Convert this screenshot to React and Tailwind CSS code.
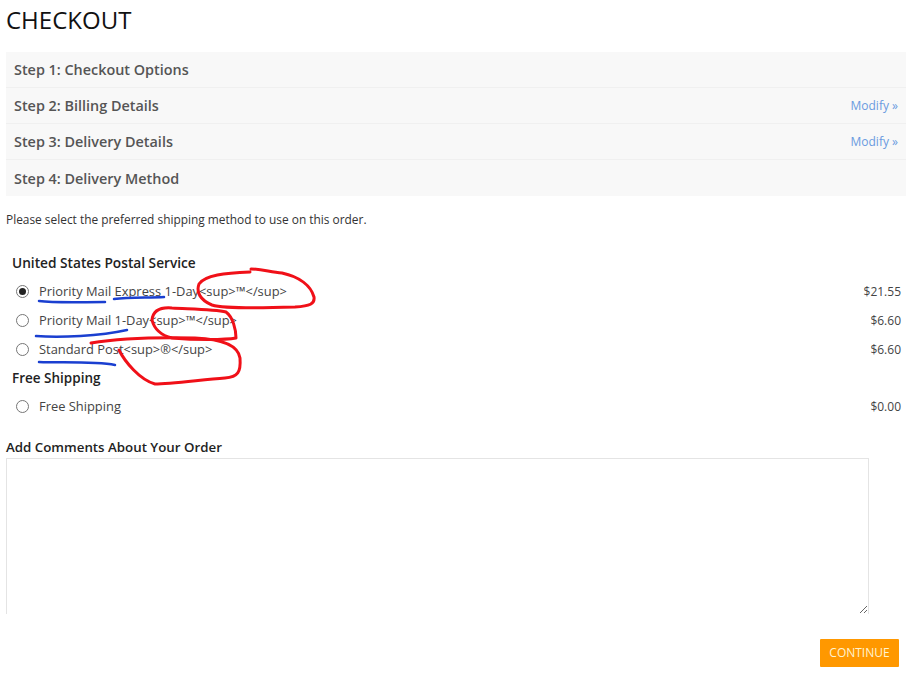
const steps = [
  { label: "Step 1: Checkout Options" },
  { label: "Step 2: Billing Details", modify: true },
  { label: "Step 3: Delivery Details", modify: true },
  { label: "Step 4: Delivery Method" },
];

function Radio({ checked }) {
  return (
    <span className="flex h-[13px] w-[13px] shrink-0 items-center justify-center rounded-full border border-[#767676] bg-white">
      {checked && <span className="h-[7px] w-[7px] rounded-full bg-[#222]" />}
    </span>
  );
}

function Option({ label, price, checked, h = "h-[29px]" }) {
  return (
    <div className={`flex ${h} items-center justify-between pl-[10px] pr-[5px] text-[#444]`}>
      <div className="flex items-center gap-[10px]">
        <Radio checked={checked} />
        <span className="text-[12.9px]">{label}</span>
      </div>
      <span className="text-[12px]">{price}</span>
    </div>
  );
}

export default function App() {
  return (
    <div className="relative h-[696px] w-[917px] overflow-hidden bg-white px-[6px] font-['Open_Sans',sans-serif]">
      <h1 className="h-[52px] pt-[3px] text-[24px] leading-[33px] font-normal text-[#111]">CHECKOUT</h1>

      <div className="w-[900px]">
        {steps.map((s) => (
          <div
            key={s.label}
            className="flex h-[36px] items-center justify-between border-b border-[#f0f0f0] bg-[#f8f8f8] px-[8px] pt-[1px] last:border-b-0"
          >
            <span className="text-[14.4px] font-semibold text-[#555]">{s.label}</span>
            {s.modify && <span className="text-[12px] text-[#6a9be0]">Modify »</span>}
          </div>
        ))}
      </div>

      <p className="mt-[14px] text-[11.9px] leading-[18px] text-[#333]">
        Please select the preferred shipping method to use on this order.
      </p>

      <div className="mt-[25px] w-[900px]">
        <div className="flex h-[20px] items-center pl-[6px] text-[13.7px] font-semibold text-[#222]">
          United States Postal Service
        </div>
        <div className="pt-[4px]">
          <Option label="Priority Mail Express 1-Day<sup>™</sup>" price="$21.55" checked />
          <Option label="Priority Mail 1-Day<sup>™</sup>" price="$6.60" />
          <Option label="Standard Post<sup>®</sup>" price="$6.60" />
        </div>
        <div className="mt-[4px] flex h-[20px] items-center pl-[6px] text-[13.5px] font-semibold text-[#222]">
          Free Shipping
        </div>
        <div className="pt-[3px]">
          <Option label="Free Shipping" price="$0.00" h="h-[32px]" />
        </div>
      </div>

      <label className="mt-[15px] block h-[18px] text-[13.3px] leading-[18px] font-semibold text-[#222]">
        Add Comments About Your Order
      </label>
      <textarea className="mt-[2px] block h-[156px] w-[863px] border border-b-0 border-[#e4e4e4] bg-white" />

      <div className="mt-[25px] flex w-[893px] justify-end">
        <button className="h-[28px] w-[79px] rounded-[1px] bg-[#ff9800] text-[12px] text-[#fff3d0]">CONTINUE</button>
      </div>

      <svg className="pointer-events-none absolute left-0 top-0" width="917" height="696" fill="none">
        <g stroke="#f01018" strokeWidth="3" strokeLinecap="round" strokeLinejoin="round">
          <path d="M251 269 C262 269 270 272 282 273 C300 277 311 286 314 297 C315 304 310 306 295 307 C265 308 225 309 212 305 C200 300 196 292 199 284 C205 275 225 273 250 272" />
          <path d="M152 320 C153 311 160 307 172 308 C190 309 215 309 226 312 C233 317 236 330 236 338 C225 340 195 340 172 338 C160 335 154 328 152 320" />
          <path d="M91 343 C115 339 150 337 195 338 C220 339 238 345 240 358 C241 372 238 377 225 378 C200 380 170 384 155 384 C140 380 125 362 119 350" />
        </g>
        <g stroke="#1a3fd0" strokeWidth="2.5" strokeLinecap="round" strokeLinejoin="round">
          <path d="M39 301 C55 303 80 302 105 302" />
          <path d="M114 299 C130 297 150 298 164 297" />
          <path d="M36 336 C60 338 100 336 127 330" />
          <path d="M39 362 C60 363 95 361 115 365" />
        </g>
      </svg>
    </div>
  );
}
